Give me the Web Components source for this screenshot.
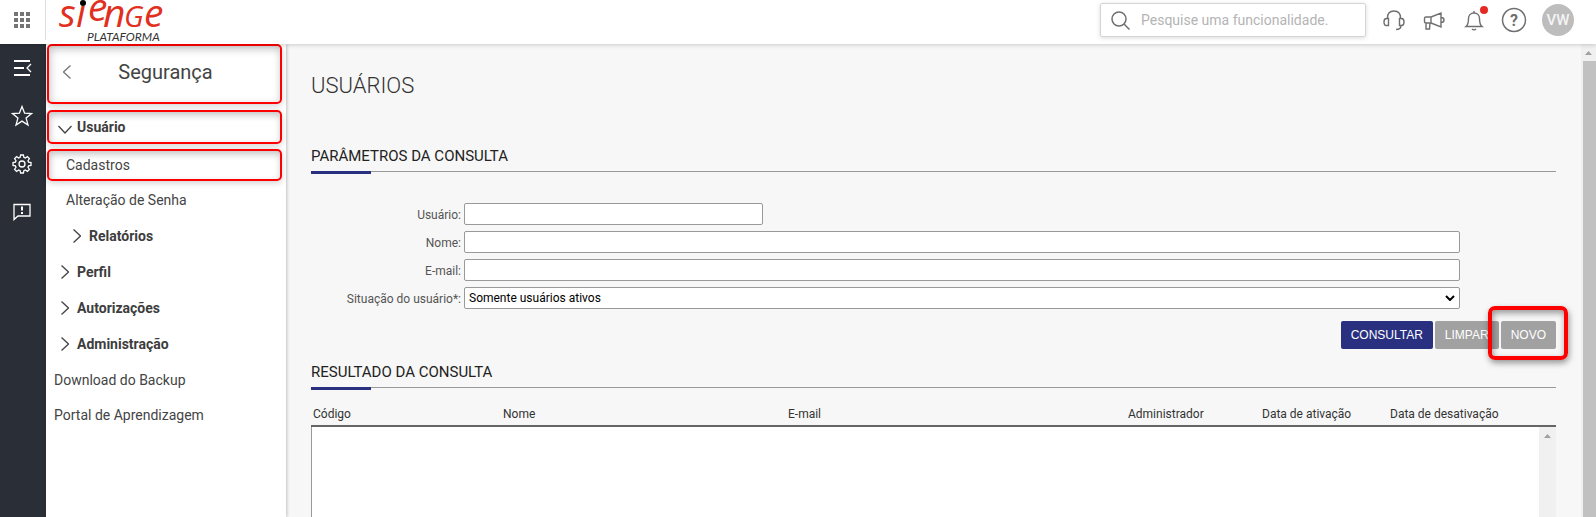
<!DOCTYPE html>
<html lang="pt-BR">
<head>
<meta charset="utf-8">
<title>Sienge Plataforma - Usuários</title>
<style>
html, body { margin: 0; height: 100%; }
body { font-family: Roboto, "Liberation Sans", sans-serif; font-size: 14px; color: #444; background: #f7f7f7; }
</style>
</head>
<body>
<sienge-app></sienge-app>
<script>
function define(name, html, setup) {
  const template = document.createElement('template');
  template.innerHTML = html;
  customElements.define(name, class extends HTMLElement {
    constructor() {
      super();
      this.attachShadow({ mode: 'open' }).append(template.content.cloneNode(true));
    }
    connectedCallback() {
      if (setup && !this.ready) { this.ready = true; setup(this, this.shadowRoot); }
    }
  });
}

define('sienge-logo', `
<style>
:host { display: block; width: 112px; height: 44px; }
svg { display: block; overflow: visible; }
.word { font: italic 500 39px "Open Sans", sans-serif; fill: #e1301e; }
.cap { font-size: 29px; text-transform: uppercase; }
.tag { font: italic 400 12px Lato, sans-serif; fill: #333; }
</style>
<svg width="112" height="44" viewBox="0 0 112 44">
  <text class="word" x="2 19 31 46 67 87" y="27 27 21 27 27 27">sien<tspan class="cap">g</tspan>e</text>
  <rect x="20" y="0" width="11" height="4" fill="#fff"/>
  <circle cx="26" cy="3" r="3" fill="#000"/>
  <text class="tag" x="30" y="41">PLATAFORMA</text>
</svg>`);

define('app-header', `
<style>
:host { display: flex; align-items: center; height: 44px; background: #fff; box-shadow: 0 1px 4px rgba(0,0,0,.18); position: relative; z-index: 1; box-sizing: border-box; padding-right: 22px; }
button { border: 0; background: none; padding: 0; display: block; color: inherit; }
svg { display: block; fill: none; stroke: #6f6f6f; stroke-width: 2; }
.apps { padding: 0 15px 0 14px; border-right: 1px solid #ddd; height: 40px; align-self: flex-start; }
.apps svg { fill: #757575; stroke: none; }
sienge-logo { margin-left: 11px; margin-right: auto; }
.search { display: flex; align-items: center; gap: 11px; box-sizing: border-box; width: 266px; height: 34px; padding-left: 10px; border: 1px solid #d5d5d5; border-radius: 2px; box-shadow: 0 1px 4px rgba(0,0,0,.15); margin: 0 16px 4px 0; }
input { flex: 1; min-width: 0; border: 0; padding: 0; outline: 0; background: none; font: 14px Roboto, sans-serif; color: #444; }
input::placeholder { color: #b4b4b4; opacity: 1; }
.tools { display: flex; align-items: center; gap: 16px; padding-bottom: 4px; }
.bell { position: relative; }
.bell i { position: absolute; right: -2px; top: -2px; width: 8px; height: 8px; border-radius: 50%; background: #e52a24; }
.user { width: 32px; height: 32px; border-radius: 50%; background: #bdbdbd; color: #f4f4f4; font: 500 15px Roboto, sans-serif; }
.q { font: 700 16px Roboto, sans-serif; stroke: none; fill: #6f6f6f; }
</style>
<button class="apps" aria-label="Aplicativos"><svg width="16" height="16"><path d="M0 0h4v4H0zM6 0h4v4H6zM12 0h4v4h-4zM0 6h4v4H0zM6 6h4v4H6zM12 6h4v4h-4zM0 12h4v4H0zM6 12h4v4H6zM12 12h4v4h-4z"/></svg></button>
<sienge-logo></sienge-logo>
<label class="search">
  <svg width="19" height="19" style="stroke-width:1.5"><circle cx="8" cy="8" r="7"/><path d="M13 13l5.500 5.500"/></svg>
  <input type="search" aria-label="Pesquisa" placeholder="Pesquise uma funcionalidade.">
</label>
<div class="tools">
  <button aria-label="Suporte"><svg width="24" height="24" style="stroke-width:1.400"><path d="M5.500 10C5.500 5.500 8 3 12 3s6.500 2.500 6.500 7M6.500 10.500v7H4.500c-1.500 0-2.500-1-2.500-3.500s1-3.500 2.500-3.500zM17.500 10.500v7h2c1.500 0 2.500-1 2.500-3.500s-1-3.500-2.500-3.500zM19 17.500c0 2.500-1.500 4-5 4"/></svg></button>
  <button aria-label="Novidades"><svg width="24" height="24" style="stroke-width:1.400"><path d="M4 9h5v6H4c-1 0-1.500-.5-1.500-1.500v-3C2.500 9.500 3 9 4 9zM9 9l10-4v14L9 15M4 15v6h3.500l.5-6M19 9.500c4 0 4 5 0 5"/></svg></button>
  <button class="bell" aria-label="Notificações"><svg width="24" height="24" style="stroke-width:1.400"><path d="M4 18.500c2-1.500 2.500-3 2.500-8 0-3 2-5.500 5.500-5.500s5.500 2.500 5.500 5.500c0 5 .5 6.500 2.500 8zM12 5V3M10 21c1 1 3 1 4 0"/></svg><i></i></button>
  <button aria-label="Ajuda"><svg width="24" height="24" viewBox="0 0 24 24" overflow="visible" style="stroke-width:1.500"><circle cx="12" cy="12" r="11.500"/><text class="q" x="12" y="18" text-anchor="middle">?</text></svg></button>
  <button class="user">VW</button>
</div>`);

define('nav-rail', `
<style>
:host { display: flex; flex-direction: column; align-items: center; gap: 24px; width: 46px; background: #2a2e36; padding-top: 12px; box-sizing: border-box; }
button { border: 0; background: none; padding: 0; margin-right: 2px; }
svg { display: block; fill: none; stroke: #fff; stroke-width: 1.300; }
</style>
<button aria-label="Recolher menu"><svg width="24" height="24"><path stroke-width="2" d="M4 5h16M4 12h10M4 19h16"/><path d="M21 8l-4 4 4 4"/></svg></button>
<button aria-label="Favoritos"><svg width="24" height="24"><path d="M12 2.500l2.600 6.700 7 .4-5.500 4.500 1.900 7-6-4-6 4 1.900-7L2.400 9.600l7-.4z"/></svg></button>
<button aria-label="Configurações"><svg width="24" height="24"><circle cx="12" cy="12" r="3"/><path d="M10.600 4h2.800l.5 2.400 1.400.6 2.100-1.400 2 2L18 9.700l.6 1.400 2.400.5v2.800l-2.400.5-.6 1.400 1.400 2.100-2 2-2.100-1.400-1.400.6-.5 2.400h-2.800l-.5-2.400-1.400-.6-2.100 1.400-2-2L6 16.300l-.6-1.400L3 14.400v-2.800l2.400-.5L6 9.700 4.600 7.600l2-2L8.700 7l1.400-.6z" transform="translate(0 -1)"/></svg></button>
<button aria-label="Mensagens"><svg width="24" height="24"><path d="M4 19.500V4.500h16V16H8z"/><path stroke-width="2" d="M12 6.500v4M12 12v2"/></svg></button>`);

define('menu-item', `
<style>
:host { display: block; }
a { display: flex; align-items: center; gap: 8px; height: 35px; padding-left: 8px; box-sizing: border-box; color: #444; text-decoration: none; font-size: 14px; }
:host([level]) a { height: 36px; }
:host([level="1"]) a { padding-left: 15px; }
:host([level="2"]) a { padding-left: 20px; }
:host([level="3"]) a { padding-left: 27px; }
:host([group]) a { font-weight: 700; color: #3d3d3d; }
:host([marked]) a { border: 2px solid #f00; border-radius: 5px; margin: 0 4px 1px 1px; height: 32px; padding-left: 17px; box-shadow: 0 2px 6px rgba(0,0,0,.18), inset 1px 3px 7px rgba(0,0,0,.24); }
:host([marked][open]) a { height: 34px; margin-bottom: 5px; padding-left: 9px; gap: 5px; }
svg { display: none; fill: none; stroke: #444; stroke-width: 1.300; }
:host([group]:not([open])) .closed, :host([open]) .opened { display: block; }
</style>
<a href="#"><svg class="closed" width="8" height="14"><path d="M.5.5L7.500 7l-7 6.500"/></svg><svg class="opened" width="14" height="14"><path d="M.5 6L7 13l6.500-7"/></svg><slot></slot></a>`);

define('side-menu', `
<style>
:host { display: block; width: 240px; background: #fff; box-shadow: 1px 0 3px rgba(0,0,0,.22); position: relative; }
.head { display: flex; align-items: center; box-sizing: border-box; height: 60px; margin: 0 4px 6px 1px; padding: 0 0 5px 14px; border: 2px solid #f00; border-radius: 5px; box-shadow: 0 2px 6px rgba(0,0,0,.18), inset 1px 3px 8px rgba(0,0,0,.24); }
button { border: 0; background: none; padding: 0; }
svg { display: block; fill: none; stroke: #777; stroke-width: 1.300; }
h2 { margin: 0; flex: 1; text-align: center; font-size: 20px; font-weight: 400; line-height: 24px; padding-right: 20px; }
</style>
<div class="head"><button aria-label="Voltar"><svg width="8" height="14"><path d="M7.500.5L.5 7l7 6.500"/></svg></button><h2>Segurança</h2></div>
<nav>
  <menu-item group open marked>Usuário</menu-item>
  <menu-item marked level="2">Cadastros</menu-item>
  <menu-item level="2">Alteração de Senha</menu-item>
  <menu-item group level="3">Relatórios</menu-item>
  <menu-item group level="1">Perfil</menu-item>
  <menu-item group level="1">Autorizações</menu-item>
  <menu-item group level="1">Administração</menu-item>
  <menu-item>Download do Backup</menu-item>
  <menu-item>Portal de Aprendizagem</menu-item>
</nav>`);

define('section-heading', `
<style>
:host { display: block; position: relative; border-bottom: 1px solid #999; }
h2 { margin: 0; font-size: 15px; font-weight: 400; line-height: 20px; color: #222; padding-bottom: 5px; }
h2::after { content: ""; position: absolute; left: 0; bottom: -3px; width: 60px; height: 3px; background: #2a3080; }
</style>
<h2><slot></slot></h2>`);

define('form-field', `
<style>
:host { display: grid; grid-template-columns: 150px 80%; column-gap: 3px; align-items: center; }
label { text-align: right; font-size: 12px; line-height: 14px; padding-top: 2px; color: #555; }
input, select { box-sizing: border-box; width: 100%; height: 22px; margin: 0; padding: 0 4px; border: 1px solid #999; border-radius: 2px; background: #fff; font: 12px Roboto, sans-serif; color: #000; }
:host([short]) input { width: 30%; }
.field { display: flex; }
select { appearance: none; background: #fff url("data:image/svg+xml,%3Csvg xmlns='http://www.w3.org/2000/svg' width='10' height='6'%3E%3Cpath d='M1 1l4 4 4-4' fill='none' stroke='%23000' stroke-width='2'/%3E%3C/svg%3E") no-repeat right 4px center; }
</style>
<label for="control"></label><div class="field"></div>`, (host, root) => {
  root.querySelector('label').textContent = host.getAttribute('label');
  const choice = host.getAttribute('choice');
  const control = document.createElement(choice ? 'select' : 'input');
  control.id = 'control';
  if (choice) control.add(new Option(choice));
  root.querySelector('.field').append(control);
});

define('action-button', `
<style>
:host { display: block; position: relative; }
button { display: block; height: 28px; border: 0; border-radius: 2px; padding: 0 10px; background: #a1a1a1; color: #fff; font: 12px "Liberation Sans", Arial, sans-serif; }
:host([primary]) button { background: #2a3080; }
:host([marked])::after { content: ""; position: absolute; inset: -15px -12px -11px -13px; border: 4px solid #f00; border-radius: 7px; box-shadow: 1px 3px 6px rgba(0,0,0,.4), inset 1px 3px 6px rgba(0,0,0,.4); pointer-events: none; }
</style>
<button><slot></slot></button>`);

define('scroll-track', `
<style>
:host { display: flex; flex-direction: column; box-sizing: border-box; width: 17px; background: #f0f0f0; }
svg { display: block; margin: 7px auto 6px; fill: #a0a0a0; }
:host([thumb])::after { content: ""; flex: 1; margin-left: 2px; background: #c1c1c1; }
</style>
<svg width="7" height="4"><path d="M0 4l3.500-4L7 4z"/></svg>`);

define('result-table', `
<style>
:host { display: flex; flex-direction: column; }
table { width: 100%; table-layout: fixed; border-collapse: collapse; border-bottom: 2px solid #666; }
th { box-sizing: border-box; padding: 0 2px; height: 24px; text-align: left; font-size: 12px; font-weight: 400; color: #333; }
.body { flex: 1; display: flex; justify-content: flex-end; background: #fff; border-left: 1px solid #999; }
.code { width: 190px; } .name { width: 285px; } .admin { width: 134px; } .on { width: 128px; } .off { width: 168px; }
</style>
<table><thead><tr><th class="code">Código</th><th class="name">Nome</th><th>E-mail</th><th class="admin">Administrador</th><th class="on">Data de ativação</th><th class="off">Data de desativação</th></tr></thead></table>
<div class="body"><scroll-track></scroll-track></div>`);

define('user-search', `
<style>
:host { display: flex; flex-direction: column; padding: 28px 25px 0; }
h1 { margin: 0 0 46px; font-size: 22px; line-height: 28px; font-weight: 300; color: #333; }
form { display: grid; gap: 6px; margin-top: 31px; }
.actions { display: flex; justify-content: flex-end; gap: 2px; margin: 12px 0 13px; }
result-table { flex: 1; margin-top: 14px; }
</style>
<h1>USUÁRIOS</h1>
<section-heading>PARÂMETROS DA CONSULTA</section-heading>
<form>
  <form-field label="Usuário:" short></form-field>
  <form-field label="Nome:"></form-field>
  <form-field label="E-mail:"></form-field>
  <form-field label="Situação do usuário*:" choice="Somente usuários ativos"></form-field>
</form>
<div class="actions">
  <action-button primary>CONSULTAR</action-button>
  <action-button>LIMPAR</action-button>
  <action-button marked>NOVO</action-button>
</div>
<section-heading>RESULTADO DA CONSULTA</section-heading>
<result-table></result-table>`);

define('sienge-app', `
<style>
:host { display: flex; flex-direction: column; height: 100vh; overflow: hidden; }
.shell { flex: 1; display: flex; min-height: 0; }
user-search { flex: 1; min-width: 0; background: #f7f7f7; }
scroll-track { width: 15px; }
</style>
<app-header></app-header>
<div class="shell">
  <nav-rail></nav-rail>
  <side-menu></side-menu>
  <user-search></user-search>
  <scroll-track thumb></scroll-track>
</div>`);
</script>
</body>
</html>
